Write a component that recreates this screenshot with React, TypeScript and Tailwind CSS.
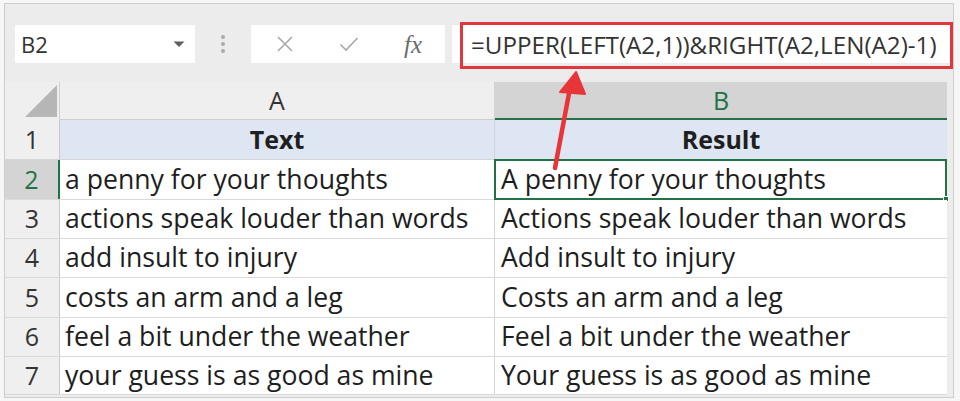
import React from "react";

const rows: [string, string][] = [
  ["a penny for your thoughts", "A penny for your thoughts"],
  ["actions speak louder than words", "Actions speak louder than words"],
  ["add insult to injury", "Add insult to injury"],
  ["costs an arm and a leg", "Costs an arm and a leg"],
  ["feel a bit under the weather", "Feel a bit under the weather"],
  ["your guess is as good as mine", "Your guess is as good as mine"],
];

const heights = ["h-[40px]", "h-[39px]", "h-[39px]", "h-[40px]", "h-[39px]", "h-[38px]"];

export default function App() {
  const font = { fontFamily: '"Open Sans", "Noto Sans", sans-serif' };
  return (
    <div className="relative w-[960px] h-[401px] bg-[#f6f6f6] pt-[3px] pl-[4px] overflow-hidden" style={font}>
      <div className="w-[950px] h-[395px] border border-[#cdcdcd] bg-[#ececec] flex flex-col">
        {/* Toolbar */}
        <div className="h-[78px] flex items-start pt-[21px] pl-[10px] shrink-0">
          <div className="w-[180px] h-[38px] bg-white flex items-center justify-between pl-[6px] pr-[10px]">
            <span className="text-[22px] text-[#333] leading-none">B2</span>
            <svg width="12" height="7" viewBox="0 0 12 7">
              <path d="M0.5 0.5 L11.5 0.5 L6 6 Z" fill="#5f5f5f" />
            </svg>
          </div>
          <div className="w-[56px] h-[38px] flex flex-col items-center justify-center gap-[3px]">
            <span className="w-[4px] h-[4px] rounded-full bg-[#a9a9a9]" />
            <span className="w-[4px] h-[4px] rounded-full bg-[#a9a9a9]" />
            <span className="w-[4px] h-[4px] rounded-full bg-[#a9a9a9]" />
          </div>
          <div className="w-[194px] h-[38px] bg-white flex items-center">
            <div className="w-[66px] flex justify-center pl-[1px]">
              <svg width="18" height="18" viewBox="0 0 18 18">
                <path d="M2 2 L16 16 M16 2 L2 16" stroke="#a8a8a8" strokeWidth="1.6" />
              </svg>
            </div>
            <div className="w-[64px] flex justify-center">
              <svg width="20" height="16" viewBox="0 0 20 16">
                <path d="M1.5 8.5 L7 14 L18.5 2" stroke="#a8a8a8" strokeWidth="1.6" fill="none" />
              </svg>
            </div>
            <div className="w-[64px] flex justify-center">
              <span className="text-[25px] italic text-[#6c6c6c] leading-none" style={{ fontFamily: '"Liberation Serif", serif' }}>fx</span>
            </div>
          </div>
          <div className="ml-[7px] flex-1 h-[38px] bg-white relative">
            <div className="absolute left-[8px] right-0 top-[-3px] bottom-[-6px] border-[3px] border-[#e1373c] flex items-center pl-[8px]">
              <span className="text-[24.2px] text-[#333] leading-none whitespace-nowrap">=UPPER(LEFT(A2,1))&amp;RIGHT(A2,LEN(A2)-1)</span>
            </div>
          </div>
        </div>

        {/* Grid */}
        <div className="flex flex-col w-[942px]">
          {/* Column header row */}
          <div className="flex h-[38px]">
            <div className="w-[55px] h-full bg-[#efefef] border-r border-[#d0d0d0] relative">
              <svg className="absolute left-[20px] top-[3px]" width="32" height="32" viewBox="0 0 32 32">
                <path d="M32 0 L32 32 L0 32 Z" fill="#b6b6b6" />
              </svg>
            </div>
            <div className="w-[435px] h-full bg-[#efefef] border-r border-[#d4d4d4] border-b border-b-[#cfcfcf] flex items-center justify-center">
              <span className="text-[25px] text-[#333] leading-none">A</span>
            </div>
            <div className="w-[452px] h-full bg-[#d4d4d4] border-b-2 border-[#217346] flex items-center justify-center">
              <span className="text-[25px] text-[#217346] leading-none">B</span>
            </div>
          </div>
          {/* Row 1 */}
          <div className="flex h-[40px] border-b border-[#d6d6d6]">
            <div className="w-[55px] bg-[#efefef] border-r border-[#c8c8c8] flex items-center justify-center">
              <span className="text-[25px] text-[#333]">1</span>
            </div>
            <div className="w-[435px] bg-[#dde6f2] border-r border-[#d4d4d4] flex items-center justify-center">
              <span className="text-[25px] font-bold text-[#1f1f1f]">Text</span>
            </div>
            <div className="w-[452px] bg-[#dde6f2] flex items-center justify-center">
              <span className="text-[25px] font-bold text-[#1f1f1f]">Result</span>
            </div>
          </div>
          {rows.map(([a, b], i) => {
            const selected = i === 0;
            return (
              <div key={i} className={`flex ${heights[i]} border-b border-[#dadada]`}>
                <div
                  className={
                    selected
                      ? "w-[55px] bg-[#d4d4d4] border-r-2 border-[#217346] flex items-center justify-center"
                      : "w-[55px] bg-[#efefef] border-r border-[#c8c8c8] flex items-center justify-center"
                  }
                >
                  <span className={selected ? "text-[25px] text-[#217346]" : "text-[25px] text-[#333]"}>{i + 2}</span>
                </div>
                <div className="w-[435px] bg-white border-r border-[#d4d4d4] flex items-center pl-[5px]">
                  <span className="text-[26.6px] text-[#1e1e1e] whitespace-nowrap">{a}</span>
                </div>
                <div className="w-[452px] bg-white flex items-center pl-[6px] relative">
                  <span className="text-[26.6px] text-[#1e1e1e] whitespace-nowrap">{b}</span>
                  {selected && (
                    <div className="absolute left-[-1px] right-0 top-[-1px] bottom-[-1px] border-2 border-[#217346]">
                      <div className="absolute right-[-4px] bottom-[-4px] w-[6px] h-[6px] bg-[#217346] border border-white" />
                    </div>
                  )}
                </div>
              </div>
            );
          })}
        </div>
      </div>

      {/* Red arrow annotation */}
      <svg className="absolute left-0 top-0 pointer-events-none" width="960" height="401" viewBox="0 0 960 401">
        <path d="M555 168 L570 88" stroke="#e8353a" strokeWidth="4.5" strokeLinecap="round" />
        <path d="M576 72 L560 92 L585 94 Z" fill="#e8353a" stroke="#e8353a" strokeWidth="2" strokeLinejoin="round" />
      </svg>
    </div>
  );
}
